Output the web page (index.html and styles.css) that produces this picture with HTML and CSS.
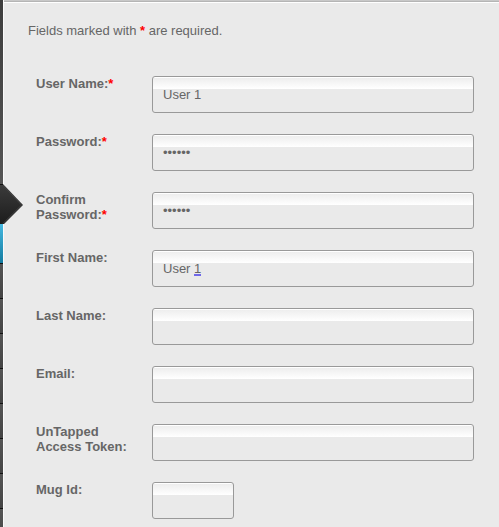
FILE: index.html
```
<!DOCTYPE html>
<html lang="en">
<head>
  <meta charset="UTF-8">
  <title>Add User</title>
  <link rel="stylesheet" href="styles.css">
</head>
<body>
  <div class="sidebar">
    <div class="nav-top"></div>
    <div class="nav-active">
      <svg class="nav-arrow" width="24" height="42" viewBox="0 0 24 42">
        <defs>
          <linearGradient id="arrowFill" x1="0" y1="0" x2="0" y2="1">
            <stop offset="0" stop-color="#3c3c3c"/>
            <stop offset="1" stop-color="#1c1c1c"/>
          </linearGradient>
        </defs>
        <path d="M0 0H3L23 21L4 40H0Z" fill="url(#arrowFill)"/>
        <path d="M3 1.5L21.5 21L3 39.5" fill="none" stroke="#444"/>
        <path d="M0 .5H3" stroke="#111"/>
      </svg>
    </div>
    <div class="nav-current"></div>
    <div class="nav-item"></div>
    <div class="nav-item"></div>
    <div class="nav-item"></div>
    <div class="nav-item"></div>
    <div class="nav-item"></div>
    <div class="nav-item"></div>
    <div class="nav-item"></div>
    <div class="nav-item"></div>
  </div>

  <div class="content">
    <p class="note">Fields marked with <span class="required">*</span> are required.</p>

    <form class="user-form">
      <div class="row">
        <label for="username">User Name:<span class="required">*</span></label>
        <input type="text" id="username" class="field" value="User 1">
      </div>
      <div class="row">
        <label for="password">Password:<span class="required">*</span></label>
        <input type="password" id="password" class="field" value="secret">
      </div>
      <div class="row">
        <label for="password2">Confirm Password:<span class="required">*</span></label>
        <input type="password" id="password2" class="field" value="secret">
      </div>
      <div class="row">
        <label>First Name:</label>
        <div class="field" contenteditable="true">User <span class="grammar">1</span></div>
      </div>
      <div class="row">
        <label for="lastName">Last Name:</label>
        <input type="text" id="lastName" class="field">
      </div>
      <div class="row">
        <label for="email">Email:</label>
        <input type="text" id="email" class="field">
      </div>
      <div class="row">
        <label for="token">UnTapped Access Token:</label>
        <input type="text" id="token" class="field">
      </div>
      <div class="row">
        <label for="mugId">Mug Id:</label>
        <input type="text" id="mugId" class="field field-small">
      </div>
    </form>
  </div>
</body>
</html>
```

FILE: styles.css
```
* {
  box-sizing: border-box;
}

body {
  display: flex;
  height: 527px;
  margin: 0;
  overflow: hidden;
  background: #eaeaea;
  color: #666;
  font-family: "Liberation Sans", Arial, sans-serif;
  font-size: 13px;
  line-height: 15px;
}

/* Navigation strip */
.sidebar {
  width: 3px;
  flex-shrink: 0;
  background: #4b4b4b;
}

.nav-top {
  height: 184px;
  background: linear-gradient(#3e3e3e, #555);
}

.nav-active {
  position: relative;
  height: 40px;
  background: #2a2a2a;
}

.nav-arrow {
  position: absolute;
  top: 0;
  left: 0;
}

.nav-current {
  height: 40px;
  background: linear-gradient(#45b8e0, #147ba0);
  border-bottom: 1px solid #111;
}

.nav-item {
  height: 35px;
  background: linear-gradient(#555, #444);
  border-bottom: 1px solid #111;
}

.content {
  flex: 1;
  border-left: 1px solid #fafafa;
  padding-left: 24px;
}

.content::before {
  content: "";
  display: block;
  height: 3px;
  margin-left: -24px;
  background: linear-gradient(#c8c8c8 1px, #b5b5b5 1px, #b5b5b5 2px, #fff 2px);
}

.note {
  margin: 20px 0 38px;
}

.required {
  color: #f00;
  font-weight: bold;
}

/* Form */
.user-form {
  padding-left: 8px;
}

.row {
  display: flex;
  align-items: flex-start;
  height: 58px;
}

.row label {
  width: 116px;
  padding-right: 20px;
  font-weight: bold;
}

.field {
  width: 322px;
  height: 37px;
  padding: 10px;
  border: 1px solid #999;
  border-radius: 3px;
  outline: none;
  background: linear-gradient(#fff 1px, #eee 1px, #fff 12px, #eaeaea 12px);
  color: #666;
  font: 13px/15px "Liberation Sans", Arial, sans-serif;
}

.field-small {
  width: 82px;
}

.grammar {
  background: linear-gradient(#7068e8, #7068e8) bottom / 100% 2px no-repeat;
}
```
